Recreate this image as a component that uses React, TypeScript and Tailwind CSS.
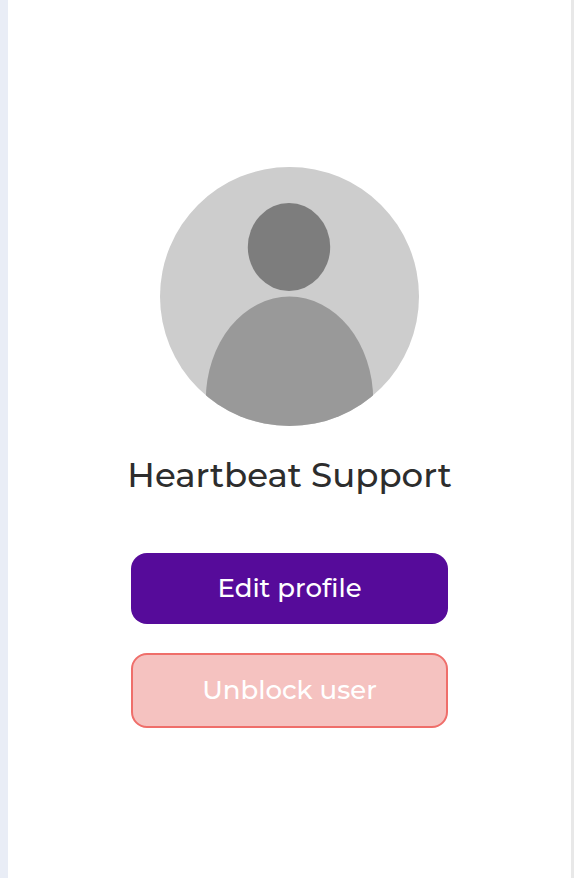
function Avatar() {
  return (
    <svg viewBox="0 0 259 259" className="w-[259px] h-[259px]" role="img" aria-label="Profile picture">
      <defs>
        <clipPath id="avatar-circle">
          <circle cx="129.5" cy="129.5" r="129.5" />
        </clipPath>
      </defs>
      <g clipPath="url(#avatar-circle)">
        <rect width="259" height="259" fill="#cdcdcd" />
        <ellipse cx="129" cy="80" rx="41.2" ry="44" fill="#7d7d7d" />
        <ellipse cx="129.5" cy="233" rx="83.7" ry="103.5" fill="#999999" />
      </g>
    </svg>
  );
}

export default function App() {
  return (
    <div className="min-h-screen flex bg-white border-l-8 border-r-3 border-l-[#e9edf6] border-r-[#e8e8e8] font-['Montserrat','Open_Sans',sans-serif]">
      <main className="flex-1 flex flex-col items-center pt-[167px] pb-10">
        <Avatar />

        <h1 className="mt-7 text-[34px] leading-[42px] font-medium text-[#2d2d2d] text-center">
          Heartbeat Support
        </h1>

        <div className="mt-[57px] w-[317px] max-w-full flex flex-col gap-[29px]">
          <button type="button" className="h-[71px] rounded-2xl bg-[#560b9a] text-white text-[26px] font-medium">
            Edit profile
          </button>
          <button type="button" className="h-[75px] rounded-2xl border-2 border-[#ef6e6a] bg-[#f5c2c0] text-white text-[26px] font-medium">
            Unblock user
          </button>
        </div>
      </main>
    </div>
  );
}
